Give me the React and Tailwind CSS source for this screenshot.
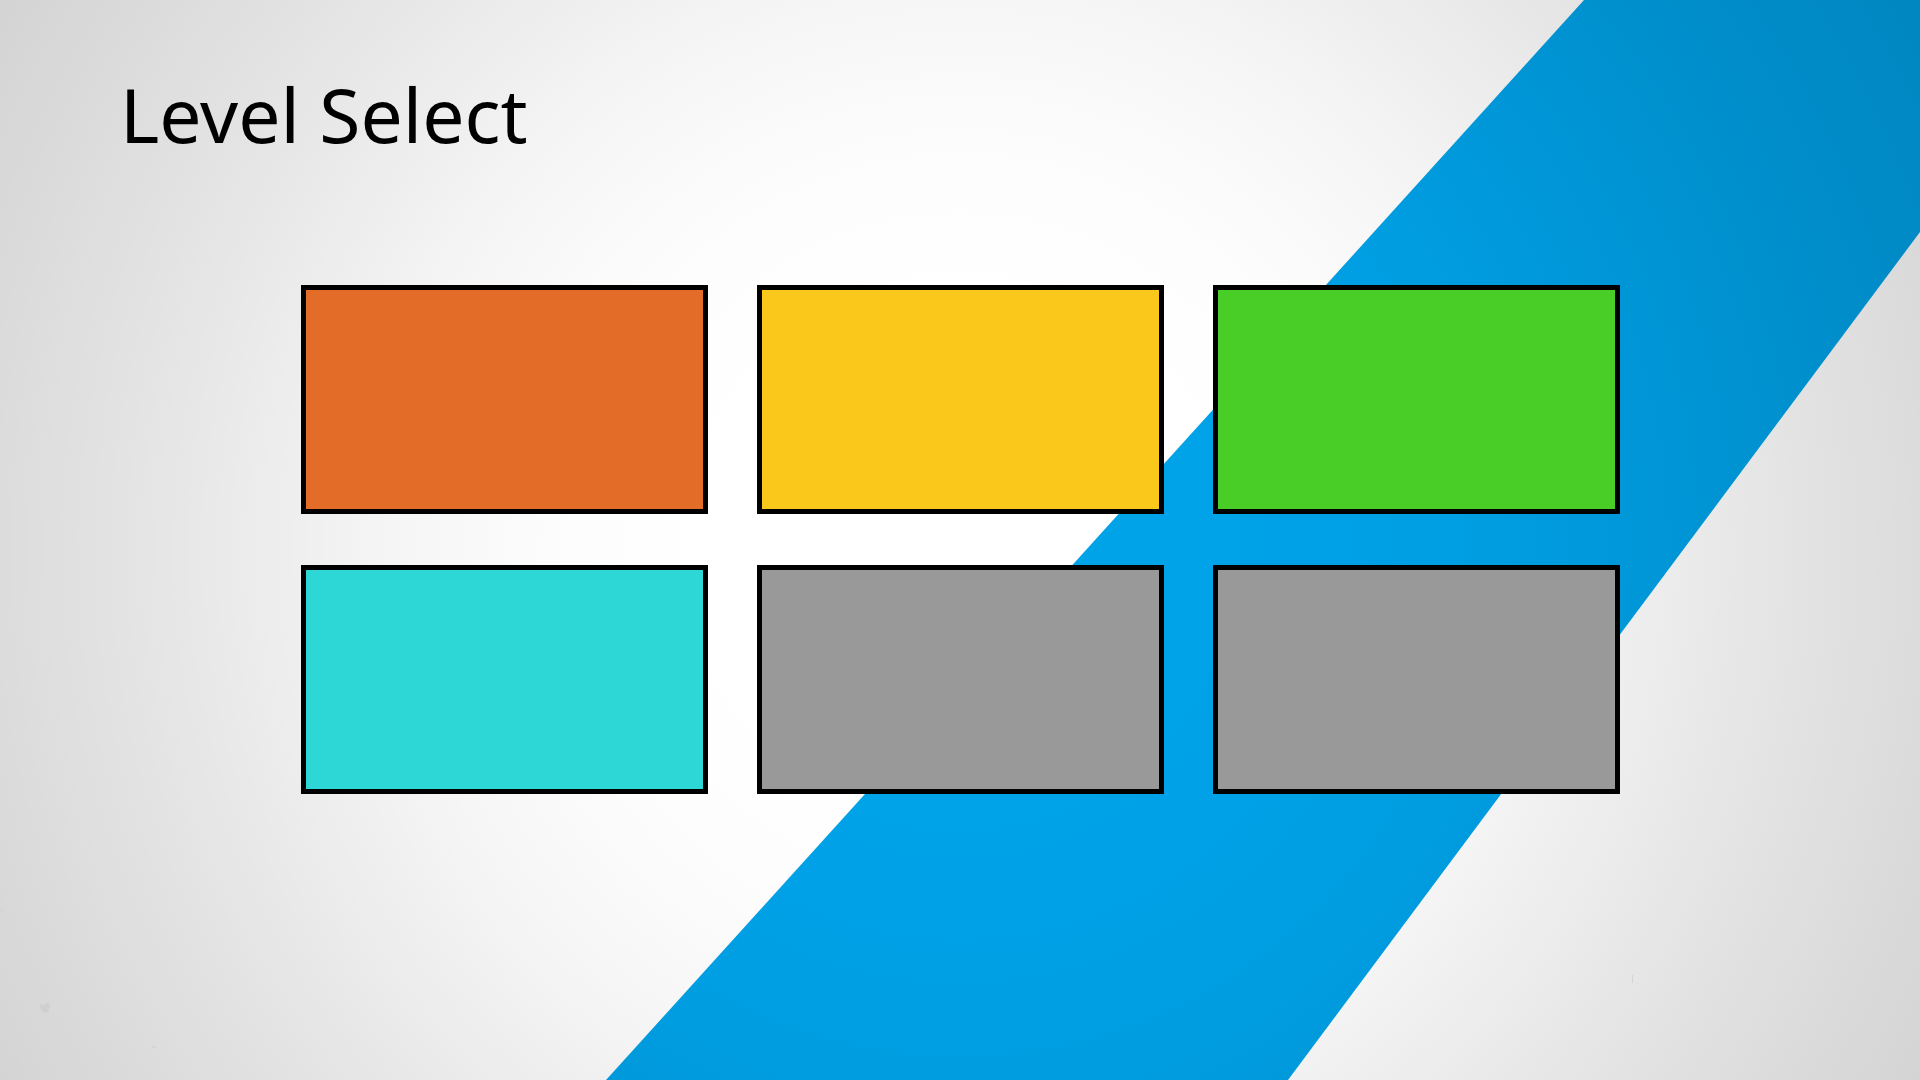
const levels = [
  { name: "Level 1", color: "bg-[#e26c28]" },
  { name: "Level 2", color: "bg-[#fac81a]" },
  { name: "Level 3", color: "bg-[#48ce26]" },
  { name: "Level 4", color: "bg-[#2dd7d5]" },
  { name: "Level 5", color: "bg-[#999999]" },
  { name: "Level 6", color: "bg-[#999999]" },
];

function Backdrop() {
  return (
    <svg
      className="absolute inset-0 -z-10 h-full w-full"
      viewBox="0 0 1920 1080"
      preserveAspectRatio="none"
      aria-hidden="true"
    >
      <defs>
        <radialGradient id="vignette" gradientUnits="userSpaceOnUse" cx="960" cy="550" r="1110">
          <stop offset="0.22" stopColor="#000" stopOpacity="0" />
          <stop offset="0.36" stopColor="#000" stopOpacity="0.01" />
          <stop offset="0.5" stopColor="#000" stopOpacity="0.036" />
          <stop offset="0.63" stopColor="#000" stopOpacity="0.073" />
          <stop offset="0.75" stopColor="#000" stopOpacity="0.108" />
          <stop offset="0.88" stopColor="#000" stopOpacity="0.142" />
          <stop offset="1" stopColor="#000" stopOpacity="0.172" />
        </radialGradient>
      </defs>
      <rect width="1920" height="1080" fill="#fff" />
      <path d="M1584 0H1920V232L1288 1080H606Z" fill="#00a2e8" />
      <rect width="1920" height="1080" fill="url(#vignette)" />
      <path d="M39 1004l5 1 4-3 2 4-2 6-4 1-3-4z" fill="#cfcfcf" />
      <path d="M152 1046h4v2h-4zM0 909h3v2H0zM1632 975h1v8h-1z" fill="#d4d4d4" />
    </svg>
  );
}

export default function App() {
  return (
    <main className="relative isolate min-h-screen overflow-hidden pt-[70px]">
      <Backdrop />
      <h1 className="pl-[120px] font-['Noto_Sans',sans-serif] text-[75px] leading-[88px] text-black">
        Level Select
      </h1>
      <div className="mx-auto mt-[127px] grid w-full max-w-[1319px] grid-cols-3 gap-x-[49px] gap-y-[51px]">
        {levels.map((level) => (
          <button
            key={level.name}
            type="button"
            aria-label={level.name}
            className={`h-[229px] cursor-pointer border-5 border-black ${level.color}`}
          />
        ))}
      </div>
    </main>
  );
}
